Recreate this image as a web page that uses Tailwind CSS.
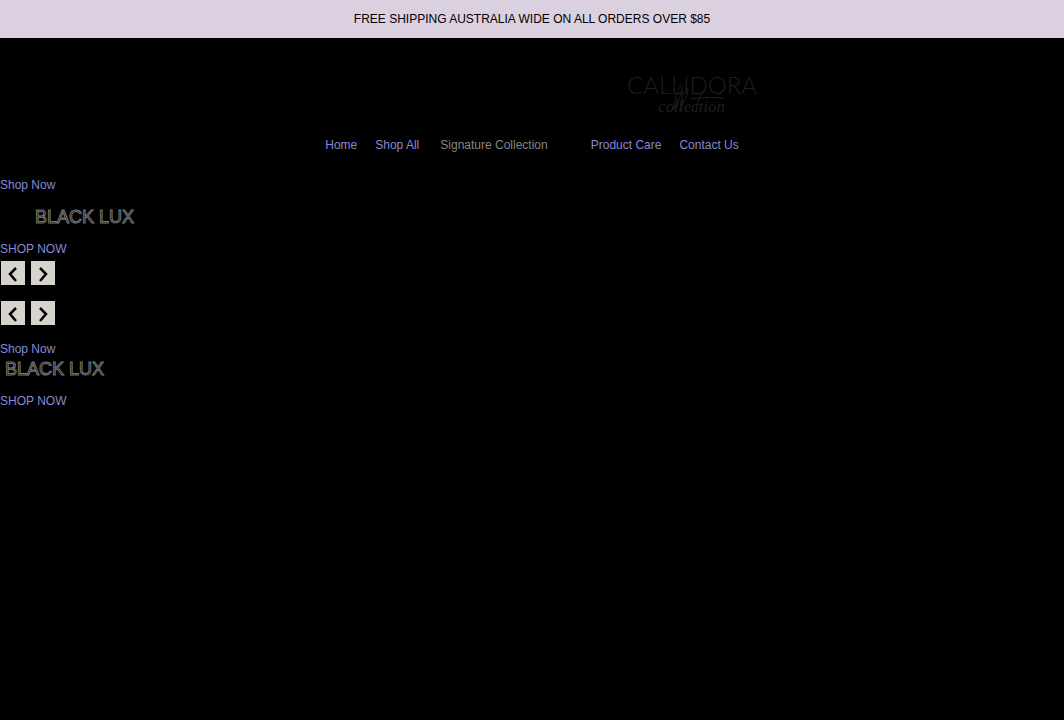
<!DOCTYPE html>
<html lang="en">
<head>
<meta charset="utf-8">
<meta name="viewport" content="width=device-width, initial-scale=1">
<title>Callidora Collection</title>
<script src="https://cdn.jsdelivr.net/npm/@tailwindcss/browser@4"></script>
</head>
<body class="min-h-screen bg-black font-['Liberation_Sans',Arial,sans-serif] text-xs text-[#8888d8]">
<p class="flex h-[38px] items-center justify-center bg-[#dbd0e0] pb-px text-black">FREE SHIPPING AUSTRALIA WIDE ON ALL ORDERS OVER $85</p>
<header>
  <div class="flex justify-center pt-8 pl-[319px]">
    <a href="#" aria-label="Callidora Collection">
      <svg class="h-12 w-[130px]" viewBox="0 0 130 48" fill="#1f1f1f">
        <text x="0" y="24" font-family="Lato" font-weight="300" font-size="24">CALLIDORA</text>
        <text x="31" y="42" font-family="Liberation Serif" font-style="italic" font-size="17">collection</text>
        <path d="M46 40c6-7 11-24 8-24s-9 23-5 25M52 40c6-7 11-22 8-22s-9 21-5 23M71 41c-4 2 1-13 4-19M63 29q17-3 34-1" fill="none" stroke="#1f1f1f"/>
      </svg>
    </a>
  </div>
  <nav class="mt-[17px] flex h-5 items-center justify-center">
    <a href="#" class="mr-[18px]">Home</a>
    <a href="#" class="mr-[21px]">Shop All</a>
    <button class="mr-[43px] text-[#858585]">Signature Collection</button>
    <a href="#" class="mr-[18px]">Product Care</a>
    <a href="#">Contact Us</a>
  </nav>
</header>
<main class="pt-[22px]">
  <section>
    <a href="#" class="block h-4 leading-4">Shop Now</a>
    <h2 class="mt-3 ml-[35px] h-6 text-lg leading-6 text-black [-webkit-text-stroke:1px_#777]">BLACK LUX</h2>
    <a href="#" class="mt-3 block h-4 leading-4">SHOP NOW</a>
  </section>
  <div class="mt-1 flex gap-1.5 pl-px">
    <button aria-label="Previous slide" class="flex size-6 items-center justify-center bg-[#d6d3cc]"><svg class="size-6" viewBox="0 0 24 24" fill="none" stroke="#000" stroke-width="2.5"><path d="M15 7l-6 6 6 7"/></svg></button>
    <button aria-label="Next slide" class="flex size-6 items-center justify-center bg-[#d6d3cc]"><svg class="size-6" viewBox="0 0 24 24" fill="none" stroke="#000" stroke-width="2.5"><path d="M9 7l6 6-6 7"/></svg></button>
  </div>
  <div class="mt-4 flex gap-1.5 pl-px">
    <button aria-label="Previous product" class="flex size-6 items-center justify-center bg-[#d6d3cc]"><svg class="size-6" viewBox="0 0 24 24" fill="none" stroke="#000" stroke-width="2.5"><path d="M15 7l-6 6 6 7"/></svg></button>
    <button aria-label="Next product" class="flex size-6 items-center justify-center bg-[#d6d3cc]"><svg class="size-6" viewBox="0 0 24 24" fill="none" stroke="#000" stroke-width="2.5"><path d="M9 7l6 6-6 7"/></svg></button>
  </div>
  <section class="mt-4">
    <a href="#" class="block h-4 leading-4">Shop Now</a>
    <h2 class="ml-[5px] h-6 text-lg leading-6 text-black [-webkit-text-stroke:1px_#777]">BLACK LUX</h2>
    <a href="#" class="mt-3 block h-4 leading-4">SHOP NOW</a>
  </section>
</main>
</body>
</html>
